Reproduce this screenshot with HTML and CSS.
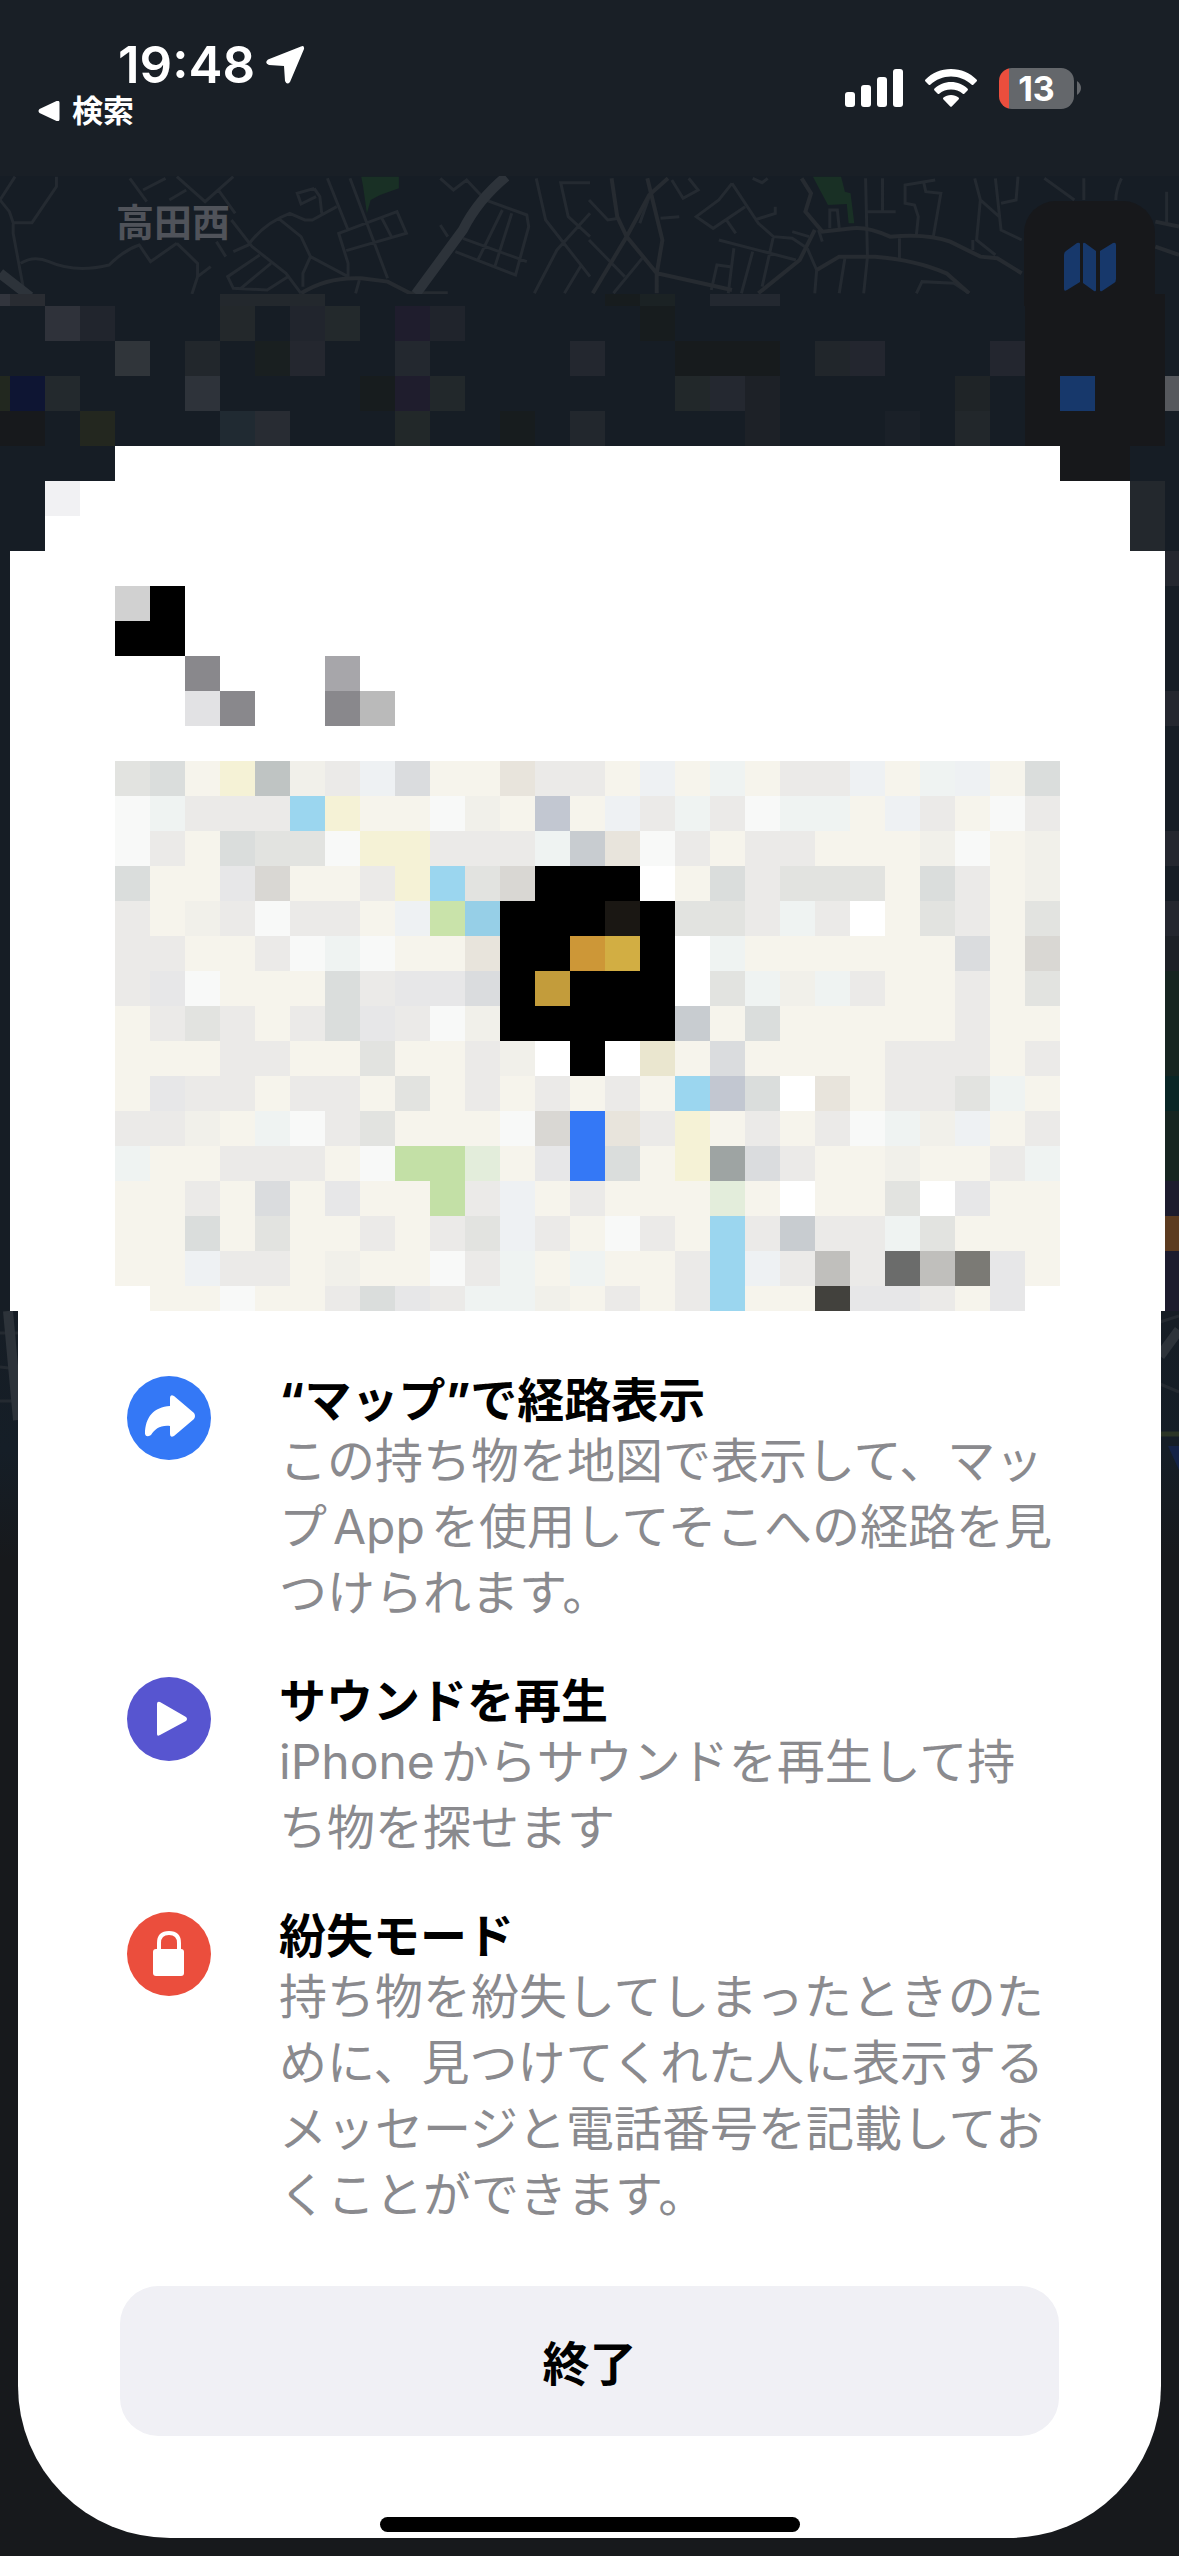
FILE: index.html
```html
<!DOCTYPE html>
<html lang="ja">
<head>
    <meta charset="UTF-8">
    <meta name="viewport" content="width=device-width, initial-scale=1.0">
    <title>探す</title>
    <link rel="stylesheet" href="styles.css">
</head>
<body>
    <!-- Dimmed map behind the sheet -->
    <svg class="backdrop" viewBox="0 0 1179 1500" aria-hidden="true">
        <g transform="scale(0.3763 0.3333)">
            <path class="park" d="M960 530H1060V565L1010 585L985 600L975 640L965 560Z"/>
            <path class="road" d="M40 530L0 600L25 635L35 668H85L150 560V530M35 668V700L65 882M55 790Q90 765 130 785Q200 820 290 795Q330 750 370 735L400 785L470 730M345 535L390 605M380 570L440 535M470 530L545 605L620 530M495 570L450 600M580 570L625 640M470 730L525 790V830L510 882M525 830L560 800M575 725L600 770M615 660L670 740L760 820L800 880M620 755L660 735Q700 670 770 640L810 660H830L895 620M835 565L790 580L800 612L840 590M835 565L850 590L855 640M740 655L800 710L825 770L805 820V860M825 770L925 830V790L900 700L1055 635L1080 700L920 752M870 535L925 690M930 535L1030 835M1015 655L1040 710M690 765L605 830L620 865L710 870L765 830M720 790L640 865M955 840L945 880M1170 535L1205 570L1240 540L1290 600L1400 645L1405 680L1370 825L1210 755M1335 630L1270 780M1360 640L1315 800M1230 715L1400 785M1170 675L1190 710M1425 535L1450 660L1568 830M1568 640L1480 750L1420 880M1568 548H1490L1510 650L1568 710M1500 880L1545 795"/>
            <path class="road wide" d="M800 880Q870 830 960 835L1030 845L1090 880H1190"/>
            <path class="road main" d="M1345 530Q1270 600 1230 690L1105 882M0 820L80 890"/>
        </g>
        <g transform="translate(589 0) scale(0.3763 0.3333)">
            <path class="park" d="M595 530H670L680 575L695 580L705 670H690L685 612L635 615Z"/>
            <path class="road" d="M0 600L50 660L80 655M135 670L160 590M190 655L240 650M0 720L95 830M145 770L65 880M220 540L250 595L290 570L265 535M380 550L345 600L285 650L330 685L415 620M380 550L450 670L490 710L540 715L580 745M365 660L390 700M440 660L495 640V620M435 535L460 548L475 535M345 720L550 780M385 745L370 880M435 755L405 880M490 710L460 860M325 870L340 795L375 800M540 695L585 710M610 690L620 725M580 745L605 810L600 880M680 775L665 880M735 535L740 770L730 880M780 535V635M740 635H815M640 685V630H660L665 685M825 715V780M920 540L840 555V610L865 615L875 650L870 705M890 550L895 575L935 580L915 710M1020 720V750M1025 535L1040 600L1030 720L1080 765M1040 600L1090 650M1080 535L1095 690L1150 720M1140 530L1135 600L1095 610M1210 535L1290 600M1315 535V600M1415 535Q1400 570 1400 600M1535 575V670M870 880L885 845L970 850L1010 880"/>
            <path class="road wide" d="M60 535L75 650L100 710L180 820L300 850L380 870M210 535L160 585L100 710L10 880M155 535L195 720L180 820V880M450 880L560 780L600 690M565 535L590 580L575 635L620 695L700 685Q740 680 800 710Q900 700 960 725L1040 770L1085 775L1150 820M605 810L665 770H760Q870 780 950 820L1010 880M1505 665L1568 680M1505 740L1568 765"/>
        </g>
        <rect class="flat" x="0" y="294" width="1179" height="1017"/>
        <g id="backdropTiles"></g>
        <!-- slivers of map beside the sheet -->
        <path class="road" d="M0 1333H18M0 1367L18 1369M0 1401H18M1160 1322L1179 1316M1160 1384L1179 1392"/>
        <path class="road main" d="M8 1311L18 1420M1160 1356L1179 1330"/>
        <path d="M1160 1434H1179" stroke="#2b3526" stroke-width="5"/>
        <path d="M1168 1446H1179V1470Z" fill="#142347"/>
    </svg>

    <header class="status-bar">
        <div class="status-left">
            <div class="clock">
                <span>19:48</span>
                <svg class="location" viewBox="0 0 40 40" aria-hidden="true">
                    <path d="M36 1.500L3 14.500Q-1 18 4 20L19 21L20 36Q22 40.500 25 37L39 4Q39.500 0 36 1.500Z"/>
                </svg>
            </div>
            <a class="back" href="#">
                <svg class="back-arrow" viewBox="0 0 21 20" aria-hidden="true">
                    <path d="M18 0Q21-1 21 2V18Q21 21 18 20L1 12Q-1 10 1 8Z"/>
                </svg>
                検索
            </a>
        </div>
        <div class="status-right">
            <svg class="signal" viewBox="0 0 58 38" aria-hidden="true">
                <rect x="0" y="23" width="10" height="15" rx="3"/>
                <rect x="16" y="16" width="10" height="22" rx="3"/>
                <rect x="32" y="8" width="10" height="30" rx="3"/>
                <rect x="48" y="0" width="10" height="38" rx="3"/>
            </svg>
            <svg class="wifi" viewBox="0 0 52 38" aria-hidden="true">
                <path d="M26 0C36 0 45 4 51.500 10.500Q52.500 11.500 51.500 12.500L48.500 15.500Q47.500 16.500 46.500 15.500C41 10.500 34 7.500 26 7.500S11 10.500 5.500 15.500Q4.500 16.500 3.500 15.500L.5 12.500Q-.5 11.500 .5 10.500C7 4 16 0 26 0Z"/>
                <path d="M26 13C32.500 13 38 15.500 42.500 19.500Q43.500 20.500 42.500 21.500L39.500 24.500Q38.500 25.500 37.500 24.500C34.500 22 30.500 20.500 26 20.500S17.500 22 14.500 24.500Q13.500 25.500 12.500 24.500L9.500 21.500Q8.500 20.500 9.500 19.500C14 15.500 19.500 13 26 13Z"/>
                <path d="M26 26C29 26 31.500 27 33.500 28.500Q34.500 29.500 33.500 30.500L27 37.200Q26 38.200 25 37.200L18.500 30.500Q17.500 29.500 18.500 28.500C20.500 27 23 26 26 26Z"/>
            </svg>
            <div class="battery-wrap">
                <div class="battery">13</div>
                <svg class="battery-tip" viewBox="0 0 4 14" aria-hidden="true">
                    <path d="M0 0Q4 3 4 7T0 14Z"/>
                </svg>
            </div>
        </div>
    </header>

    <section class="map-top">
        <span class="place">高田西</span>
        <button class="map-mode" aria-label="マップ">
            <svg viewBox="0 0 54 50" aria-hidden="true">
                <path d="M1 13Q1 10 3 9L14 1Q17 0 17 2V40L4 48Q1 50 1 47ZM20 2Q20 0 22 1L33 9V48Q33 50 31 49L20 41ZM37 9L50 1Q53 0 53 3V37Q53 40 51 41L39 49Q37 50 37 48Z"/>
            </svg>
        </button>
    </section>

    <main class="sheet">
        <div class="sheet-top">
            <svg class="heading-art" viewBox="0 0 1155 315" aria-hidden="true">
                <rect x="35" y="35" width="35" height="35" fill="#f1f1f3"/>
                <path d="M140 140H175V210H105V175H140Z" fill="#000"/>
                <rect x="105" y="140" width="35" height="35" fill="#d1d1d1"/>
                <rect x="175" y="210" width="35" height="35" fill="#89888c"/>
                <rect x="175" y="245" width="35" height="35" fill="#e2e2e4"/>
                <rect x="210" y="245" width="35" height="35" fill="#89888c"/>
                <rect x="315" y="210" width="35" height="35" fill="#a7a6aa"/>
                <rect x="315" y="245" width="35" height="35" fill="#89888c"/>
                <rect x="350" y="245" width="35" height="35" fill="#bababa"/>
            </svg>
            <svg class="map-preview" id="mapPreview" viewBox="0 0 27 15.714" role="img" aria-label="地図"></svg>
        </div>

        <div class="sheet-body">
            <ul class="features">
                <li class="feature">
                    <svg class="feature-icon" viewBox="0 0 84 84" aria-hidden="true">
                        <circle cx="42" cy="42" r="42" fill="#3478f6"/>
                        <path d="M43 22Q43 18 47 20L67 37Q69 40 67 43L47 60Q43 62 43 58V50C33 49 28 53 24 59Q19 62 18 58C18 41 27 31 43 30Z" fill="#fff"/>
                    </svg>
                    <div class="feature-text">
                        <h2>“マップ”で経路表示</h2>
                        <p>この持ち物を地図で表示して、マップAppを使用してそこへの経路を見つけられます。</p>
                    </div>
                </li>
                <li class="feature">
                    <svg class="feature-icon" viewBox="0 0 84 84" aria-hidden="true">
                        <circle cx="42" cy="42" r="42" fill="#5755d0"/>
                        <path d="M30 27Q30 24 33 25L59 40Q61 42 59 44L33 58Q30 60 30 57Z" fill="#fff"/>
                    </svg>
                    <div class="feature-text">
                        <h2>サウンドを再生</h2>
                        <p>iPhoneからサウンドを再生して持ち物を探せます</p>
                    </div>
                </li>
                <li class="feature">
                    <svg class="feature-icon" viewBox="0 0 84 84" aria-hidden="true">
                        <circle cx="42" cy="42" r="42" fill="#eb4e3d"/>
                        <rect x="26" y="37" width="31" height="27" rx="3" fill="#fff"/>
                        <path d="M32 39V31Q32 21 42 21T52 31V39" fill="none" stroke="#fff" stroke-width="4"/>
                    </svg>
                    <div class="feature-text">
                        <h2>紛失モード</h2>
                        <p>持ち物を紛失してしまったときのために、見つけてくれた人に表示するメッセージと電話番号を記載しておくことができます。</p>
                    </div>
                </li>
            </ul>
            <button class="done-btn">終了</button>
            <div class="home-indicator"></div>
        </div>
    </main>

    <script src="script.js"></script>
</body>
</html>
```

FILE: styles.css
```css
* {
    box-sizing: border-box;
}

body {
    position: relative;
    margin: 0;
    min-height: 100vh;
    padding-bottom: 18px;
    font-family: Inter, 'Noto Sans CJK JP', sans-serif;
    background: linear-gradient(#161d25 1311px, #151e27 1450px, #17191c 1560px);
    color: #000;
    overflow-x: hidden;
}

.backdrop {
    position: absolute;
    top: 0;
    left: 0;
    width: 100%;
    z-index: -1;
}

.road {
    fill: none;
    stroke: #242a31;
    stroke-width: 3;
    vector-effect: non-scaling-stroke;
}

.wide {
    stroke: #262b31;
    stroke-width: 4;
}

.main {
    stroke: #2d333a;
    stroke-width: 10;
}

.park {
    fill: #193025;
}

.flat {
    fill: #161d25;
}

/* status bar */
.status-bar {
    display: flex;
    justify-content: space-between;
    height: 176px;
    padding: 35px 98px 0 38px;
    background: #191f26;
    color: #fff;
}

.status-bar svg {
    fill: currentColor;
}

.clock {
    display: flex;
    align-items: center;
    gap: 10px;
    padding-left: 80px;
    font-size: 51px;
    font-weight: 600;
    line-height: 60px;
}

.location {
    width: 40px;
    height: 40px;
}

.back {
    display: flex;
    align-items: center;
    gap: 12px;
    color: #fff;
    font-size: 31px;
    font-weight: 700;
    line-height: 32px;
    text-decoration: none;
}

.back-arrow {
    width: 22px;
    height: 20px;
}

.status-right {
    display: flex;
    align-items: center;
    gap: 22px;
    height: 106px;
}

.signal {
    width: 58px;
    height: 38px;
}

.wifi {
    width: 52px;
    height: 38px;
}

.battery-wrap {
    display: flex;
    align-items: center;
    gap: 3px;
}

.battery {
    width: 75px;
    height: 41px;
    border-radius: 13px;
    background: linear-gradient(90deg, #eb4e3d 10px, #64676b 10px);
    font-size: 34px;
    font-weight: 700;
    line-height: 42px;
    text-align: center;
}

.battery-tip {
    width: 4px;
    height: 14px;
    color: #64676b;
}

/* visible strip of the map */
.map-top {
    display: flex;
    justify-content: space-between;
    height: 270px;
    padding: 25px 24px 0 116px;
}

.place {
    color: #50535a;
    font-size: 38px;
    font-weight: 700;
    line-height: 42px;
}

.map-mode {
    width: 131px;
    height: 105px;
    padding: 30px 0 0;
    border: none;
    border-radius: 32px 32px 0 0;
    background: #17181b;
    cursor: pointer;
}

.map-mode svg {
    width: 54px;
    height: 50px;
    fill: #17386b;
}

/* sheet */
.sheet-top {
    margin: 0 14px 0 10px;
    background: #fff;
    clip-path: polygon(
        105px 0, calc(100% - 105px) 0,
        calc(100% - 105px) 35px, calc(100% - 35px) 35px,
        calc(100% - 35px) 105px, 100% 105px,
        100% 100%, 0 100%,
        0 105px, 35px 105px,
        35px 35px, 105px 35px
    );
}

.heading-art {
    display: block;
    width: 100%;
}

.map-preview {
    display: block;
    width: calc(100% - 210px);
    margin: 0 auto;
}

.sheet-body {
    margin: 0 18px;
    padding: 61px 102px 6px;
    border-radius: 0 0 152px 152px;
    background: #fff;
}

.features {
    display: flex;
    flex-direction: column;
    gap: 47px;
    margin: 0 0 58px;
    padding: 0;
    list-style: none;
}

.feature {
    display: flex;
    gap: 68px;
    padding-left: 7px;
}

.feature-icon {
    flex: none;
    width: 84px;
    height: 84px;
    margin-top: 4px;
}

.feature-text h2 {
    margin: 0;
    font-size: 47px;
    font-weight: 700;
    line-height: 56px;
}

.feature-text p {
    margin: 0;
    color: #8a8a8e;
    font-size: 48px;
    font-weight: 400;
    line-height: 66px;
    text-autospace: normal;
}

.done-btn {
    display: block;
    width: 100%;
    height: 150px;
    border: none;
    border-radius: 38px;
    background: #f0f0f5;
    color: #000;
    font-family: inherit;
    font-size: 47px;
    font-weight: 700;
    cursor: pointer;
}

.home-indicator {
    width: 420px;
    height: 15px;
    margin: 81px auto 0;
    border-radius: 8px;
    background: #000;
}
```

FILE: script.js
```js
const SVG_NS = 'http://www.w3.org/2000/svg';

function addTile(parent, x, y, width, height, color) {
    const rect = document.createElementNS(SVG_NS, 'rect');
    rect.setAttribute('x', x);
    rect.setAttribute('y', y);
    rect.setAttribute('width', width);
    rect.setAttribute('height', height);
    rect.setAttribute('fill', color);
    rect.setAttribute('shape-rendering', 'crispEdges');
    parent.appendChild(rect);
}

// one letter per tile colour
const palette = {
    '.': '#f6f4ec', g: '#ebeae8', w: '#f8f9f8', W: '#ffffff', y: '#f5f2d6',
    b: '#9bd6ef', B: '#96cfe7', n: '#c9e3aa', G: '#c3e0a6', l: '#e3eddb',
    s: '#dadddc', m: '#e2e3e0', d: '#bfc4c3', c: '#f1f0ea', a: '#eef1f3',
    u: '#c2c7d1', v: '#c8ccd0', k: '#000000', o: '#cd9737', O: '#d2ae43',
    q: '#c39c3b', p: '#dadcde', r: '#e7e7e8', t: '#d9d7d3', x: '#e8e4dc',
    f: '#eff3f2', Z: '#1a1713', Y: '#eae6cf', i: '#3478f6', H: '#9ea4a3',
    V: '#c0bfbc', D: '#6b6c6b', K: '#7b7a75', N: '#42413d'
};

const previewRows = [
    'ms.ydcgap..xgg.a.f.gga.fa.s',
    'wfgggby..wc.u.agfgwff.ag.wg',
    'wg.smmwyygggfvxwg.gg...cw.c',
    's..rt..gybmtkkkW.sgmmm.sg.c',
    'g.cgwgg.anBkkkZkmmgfgW.mg.m',
    'gg..gwfw..xkkoOkWf......p.t',
    'grw...sgrrpkqkkkWmfcfg..g.m',
    '.gmg.gsrgwckkkkkv.s.....g..',
    '...gg..m..gcWkWY.p....ggg.g',
    '.rgg.gg.m.g.g.g.busWx.ggmf.',
    'ggc.fwgm...wtixgy.g.gwfca.g',
    'f..ggg.wGGl.ris.yHpg..c..gf',
    '..g.p.r..Gga.g...l.W..mWr..',
    '..s.m..g.gmag.wg.bgvggfm...',
    '..agg.c..wgf.f..gbagVgDVKr.',
    ' ..w..gsrgffc.g.gb..Nrrg.r '
];

const preview = document.getElementById('mapPreview');
previewRows.forEach((row, y) => {
    [...row].forEach((key, x) => {
        if (palette[key]) {
            addTile(preview, x, y, 1, 1, palette[key]);
        }
    });
});

// [column, y, columns wide, height, colour]
const backdropTiles = [
    [-1, 294, 1, 12, '#32353d'], [0, 294, 1, 12, '#292c32'], [6, 294, 3, 12, '#23282d'],
    [17, 294, 1, 12, '#171c1e'], [18, 294, 1, 12, '#1b2224'], [20, 294, 2, 12, '#232830'],
    [1, 306, 1, 35, '#2f323a'], [2, 306, 1, 35, '#21252d'], [6, 306, 1, 35, '#23282b'],
    [8, 306, 1, 35, '#21252d'], [9, 306, 1, 35, '#23292c'], [11, 306, 1, 35, '#1f1d2d'],
    [12, 306, 1, 35, '#20242c'], [18, 306, 1, 35, '#171c1e'],
    [3, 341, 1, 35, '#30353a'], [5, 341, 1, 35, '#22272c'], [7, 341, 1, 35, '#191f20'],
    [8, 341, 1, 35, '#24272f'], [11, 341, 1, 35, '#23282f'], [16, 341, 1, 35, '#23272f'],
    [19, 341, 3, 35, '#171b1d'], [23, 341, 1, 35, '#21262b'], [24, 341, 1, 35, '#23262f'],
    [28, 341, 1, 35, '#23262f'],
    [-1, 376, 1, 35, '#22281f'], [0, 376, 1, 35, '#0e1533'], [1, 376, 1, 35, '#23292d'],
    [5, 376, 1, 35, '#2e333a'], [10, 376, 1, 35, '#171c1e'], [11, 376, 1, 35, '#1f1d2d'],
    [12, 376, 1, 35, '#22282b'], [19, 376, 1, 35, '#22282a'], [20, 376, 1, 35, '#242830'],
    [21, 376, 1, 35, '#1d2127'], [27, 376, 1, 35, '#1f2427'], [33, 376, 1, 35, '#56585d'],
    [-1, 411, 2, 35, '#17191c'], [2, 411, 1, 35, '#23271f'], [6, 411, 1, 35, '#202a32'],
    [7, 411, 1, 35, '#282c33'], [11, 411, 1, 35, '#222829'], [14, 411, 1, 35, '#171c1e'],
    [16, 411, 1, 35, '#22272d'], [21, 411, 1, 35, '#1d2127'], [25, 411, 1, 35, '#1a2028'],
    [27, 411, 1, 35, '#22272b'],
    [29, 294, 4, 152, '#17181b'], [30, 376, 1, 35, '#17386b'], [30, 446, 2, 35, '#17181b'],
    [32, 481, 1, 70, '#23282d'],
    [33, 551, 1, 35, '#24272f'], [33, 691, 1, 35, '#24272f'], [33, 831, 1, 35, '#24272f'],
    [33, 901, 1, 35, '#24272f'], [33, 936, 1, 35, '#1d2127'], [33, 971, 1, 105, '#162521'],
    [33, 1076, 1, 35, '#092626'], [33, 1111, 1, 70, '#162521'], [33, 1181, 1, 130, '#1d1c2e'],
    [33, 1216, 1, 35, '#5c3b20']
];

const backdrop = document.getElementById('backdropTiles');
backdropTiles.forEach(([col, y, cols, height, color]) => {
    addTile(backdrop, 10 + col * 35, y, cols * 35, height, color);
});
```
